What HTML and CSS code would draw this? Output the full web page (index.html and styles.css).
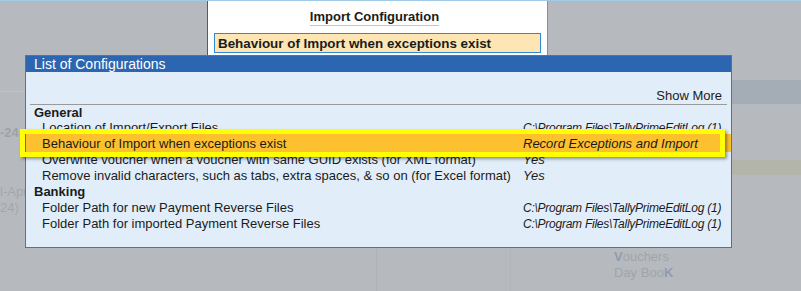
FILE: index.html
```html
<!DOCTYPE html>
<html lang="en">

<head>
    <meta charset="UTF-8">
    <meta name="viewport" content="width=device-width, initial-scale=1.0">
    <title>Import Configuration</title>
    <link rel="stylesheet" href="styles.css">
</head>

<body>
    <!-- Dimmed screen behind the popup -->
    <div class="screen">
        <div class="topline"></div>

        <div class="top-row">
            <section class="import-panel">
                <h1 class="panel-title">Import Configuration</h1>
                <div class="field">Behaviour of Import when exceptions exist</div>
            </section>
        </div>

        <div class="lower">
            <div class="col col-left">
                <div class="faint-line"></div>
                <p class="faint faint-bold">-24</p>
                <p class="faint faint-apr">l-Apr</p>
                <p class="faint">24)</p>
            </div>
            <div class="col col-mid"></div>
            <div class="col col-right">
                <div class="band band-blue"></div>
                <div class="band band-beige"></div>
                <ul class="faint-menu">
                    <li><b>V</b>ouchers</li>
                    <li>Day Boo<b>K</b></li>
                </ul>
            </div>
        </div>
    </div>

    <!-- List of Configurations popup -->
    <div class="popup">
        <div class="popup-header">List of Configurations</div>
        <div class="popup-body">
            <div class="show-more">Show More</div>

            <div class="group-title group-first">General</div>
            <div class="row">
                <span>Location of Import/Export Files</span>
                <span class="value path">C:\Program Files\TallyPrimeEditLog (1)</span>
            </div>
            <div class="row row-active">
                <span>Behaviour of Import when exceptions exist</span>
                <span class="value">Record Exceptions and Import</span>
            </div>
            <div class="row">
                <span>Overwrite voucher when a voucher with same GUID exists (for XML format)</span>
                <span class="value">Yes</span>
            </div>
            <div class="row">
                <span>Remove invalid characters, such as tabs, extra spaces, &amp; so on (for Excel format)</span>
                <span class="value">Yes</span>
            </div>

            <div class="group-title">Banking</div>
            <div class="row">
                <span>Folder Path for new Payment Reverse Files</span>
                <span class="value path">C:\Program Files\TallyPrimeEditLog (1)</span>
            </div>
            <div class="row">
                <span>Folder Path for imported Payment Reverse Files</span>
                <span class="value path">C:\Program Files\TallyPrimeEditLog (1)</span>
            </div>
        </div>
    </div>
</body>

</html>
```

FILE: styles.css
```css
/* Base */
body, html {
    margin: 0;
    padding: 0;
}

body {
    width: 801px;
    height: 291px;
    overflow: hidden;
    position: relative;
    background-color: #b6babe;
    font-family: 'Liberation Sans', Arial, sans-serif;
    font-size: 13px;
    color: #1b1b1b;
}

p, ul, h1 {
    margin: 0;
    padding: 0;
}

/* Background screen */
.topline {
    height: 1px;
    background-color: #9fcaea;
}

.top-row {
    display: flex;
    height: 54px;
}

.import-panel {
    margin-left: 207px;
    width: 339px;
    background-color: #fff;
    border-left: 1px solid #5a5a5a;
    border-right: 1px solid #8c8c8c;
    display: flex;
    flex-direction: column;
    align-items: center;
    padding-top: 8px;
}

.panel-title {
    font-size: 13px;
    font-weight: bold;
    line-height: 16px;
    border-bottom: 1px solid #c4c4c4;
    margin-left: -6px;
}

.field {
    align-self: stretch;
    margin: 7px 6px 0 6px;
    padding: 2px 3px 0;
    line-height: 16px;
    font-size: 13.4px;
    font-weight: bold;
    background-color: #fde6b4;
    border: 1px solid #2e8ad6;
}

.lower {
    display: grid;
    grid-template-columns: 376px 134px 1fr;
    height: 236px;
}

.col-mid,
.col-right {
    border-left: 1px solid #adb4bb;
}

.col-left {
    padding-top: 36px;
}

.faint-line {
    height: 1px;
    background-color: #c2c5c8;
}

.faint {
    line-height: 16px;
    color: #a3a7ab;
}

.faint-bold {
    margin-top: 33px;
    font-weight: bold;
    color: #9da2a7;
}

.faint-apr {
    margin-top: 43px;
}

.band {
    height: 24px;
}

.band-blue {
    margin-top: 25px;
    background-color: #a4adb6;
}

.band-beige {
    margin-top: 56px;
    height: 15px;
    background-color: #b4b5aa;
}

.faint-menu {
    list-style: none;
    margin-top: 74px;
    padding-left: 103px;
    line-height: 16px;
    color: #a0a5ab;
}

.faint-menu b {
    color: #8f9cb0;
}

/* Popup */
.popup {
    position: absolute;
    top: 55px;
    left: 25px;
    width: 705px;
    border: 1px solid #6e6e6e;
    background-color: #e1eef9;
}

.popup-header {
    background-color: #2c66b0;
    color: #fff;
    font-size: 14px;
    line-height: 16px;
    padding-left: 8px;
}

.popup-body {
    padding: 16px 0 15px;
}

.show-more {
    margin: 0 4px;
    padding-right: 5px;
    text-align: right;
    line-height: 16px;
    border-bottom: 1px solid #9a9a9a;
}

.group-title {
    padding-left: 8px;
    line-height: 16px;
    font-weight: bold;
}

.group-first {
    line-height: 15px;
}

.row {
    display: grid;
    grid-template-columns: 481px 1fr;
    padding-left: 16px;
    line-height: 16px;
    white-space: nowrap;
}

.value {
    font-style: italic;
}

.value.path {
    font-size: 12px;
    letter-spacing: -0.25px;
}

.row-active {
    position: relative;
    margin-top: -2px;
    padding-top: 2px;
    background-color: #fdc12f;
}

/* yellow focus frame drawn over the neighbouring rows */
.row-active::after {
    content: '';
    position: absolute;
    top: -5px;
    bottom: -5px;
    left: -6px;
    right: 6px;
    border: 5px solid #ffff00;
    box-shadow: 2px 2px 3px rgba(0, 0, 0, 0.4);
}
```
